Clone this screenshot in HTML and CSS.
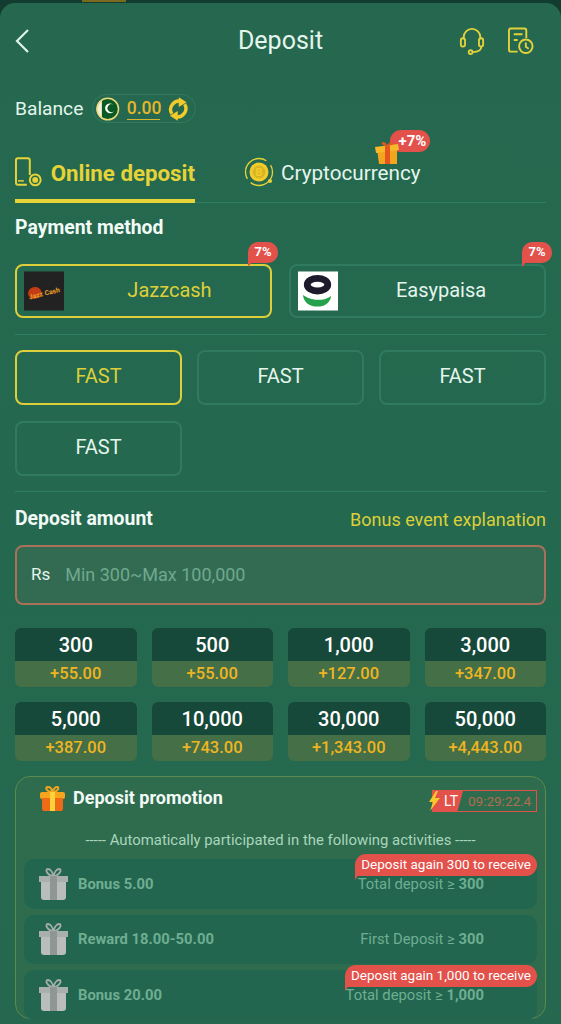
FILE: index.html
```html
<!DOCTYPE html>
<html lang="en">
<head>
  <meta charset="UTF-8" />
  <meta name="viewport" content="width=device-width, initial-scale=1.0" />
  <title>Deposit</title>
  <link rel="stylesheet" href="styles.css">
</head>
<body>
  <div class="top-mark"></div>
  <div class="panel">
    <header class="head">
      <svg class="back" width="16" height="24" viewBox="0 0 16 24"><path d="M13 1 2 12l11 11" fill="none" stroke="#dff3e8" stroke-width="2.2"/></svg>
      <h1 class="head-title">Deposit</h1>
      <div class="head-icons">
        <svg width="26" height="30" viewBox="0 0 28 30" fill="none" stroke="#e3d13c" stroke-width="2"><path d="M5 13V11a9 9 0 0 1 18 0v2"/><rect x="2" y="12" width="4.5" height="9" rx="2.2"/><rect x="21.5" y="12" width="4.5" height="9" rx="2.2"/><path d="M24 21c0 4-3 6-9 6"/><circle cx="12.5" cy="27" r="2"/></svg>
        <svg width="26" height="30" viewBox="0 0 27 30" fill="none" stroke="#e3d13c" stroke-width="2"><path d="M10 26H3a2 2 0 0 1-2-2V4a2 2 0 0 1 2-2h14a2 2 0 0 1 2 2v8"/><path d="M6 8h9M6 14h4"/><circle cx="18.5" cy="20.5" r="7"/><path d="M18.5 16.5v4.500l3 2"/></svg>
      </div>
    </header>

    <div class="balance">
      <span class="balance-label">Balance</span>
      <div class="balance-pill">
        <svg width="24" height="24" viewBox="0 0 24 24"><circle cx="12" cy="12" r="11" fill="#0b5a26"/><path d="M6 2.500A11 11 0 0 0 6 21.500Z" fill="#f4efd8"/><circle cx="12" cy="12" r="11" fill="none" stroke="#ecd97a" stroke-width="1.500"/><path d="M17.500 7.500A5 5 0 1 0 18.500 14 4 4 0 1 1 17.500 7.500Z" fill="#fff"/></svg>
        <span class="balance-num">0.00</span>
        <svg width="23" height="24" viewBox="0 0 23 24" fill="#f3c92c"><g id="turn"><path d="M15 4.500A8.500 8.500 0 0 0 5 17" fill="none" stroke="#f3c92c" stroke-width="3.500"/><path d="M12 0l8 5-8 5Z"/></g><use href="#turn" transform="rotate(180 11.500 12)"/></svg>
      </div>
    </div>

    <nav class="tabs">
      <div class="tab tab-on">
        <svg width="27" height="30" viewBox="0 0 27 30" fill="none" stroke="#e6d338" stroke-width="2"><path d="M12 28H3a2 2 0 0 1-2-2V3a2 2 0 0 1 2-2h10a2 2 0 0 1 2 2v15"/><path d="M3 24h6" stroke-width="1.500"/><circle cx="20.500" cy="23" r="5.500"/><circle cx="20.500" cy="23" r="3" fill="#e6d338" stroke="none"/></svg>
        <span>Online deposit</span>
      </div>
      <div class="tab">
        <svg width="30" height="30" viewBox="0 0 30 30" fill="none"><circle cx="15" cy="15" r="13.500" stroke="#e6d338" stroke-width="1.300" stroke-dasharray="30 5 36 6"/><circle cx="15" cy="15" r="9.500" fill="#f2cc2d"/><circle cx="15" cy="15" r="6.500" fill="#d9b524"/><text x="15" y="19" class="btc">B</text><circle cx="26" cy="24" r="2" fill="#e6d338"/></svg>
        <span>Cryptocurrency</span>
        <div class="plus-tag">+7%</div>
        <svg class="tab-gift" width="26" height="24" viewBox="0 0 26 24"><path d="M3 8h20v15H5Z" fill="#f3a51d"/><path d="M1 6 24 3l1 6L2 12Z" fill="#f7b92a"/><path d="M11 5h5v18h-5Z" fill="#e4551f"/><path d="M13 5C8 5 6 1 9 1s4 3 4 4c0-1 2-4 5-4s0 4-5 4Z" fill="#e4551f"/></svg>
      </div>
    </nav>

    <h2 class="sec-title">Payment method</h2>
    <div class="methods">
      <div class="method method-on">
        <svg class="method-logo" width="40" height="40" viewBox="0 0 41 40"><rect width="41" height="40" fill="#222"/><ellipse cx="11" cy="22" rx="7" ry="6" fill="#c43c14" transform="rotate(-15 11 22)"/><text x="4" y="25" class="jazz" transform="rotate(-14 20 20)">Jazz Cash</text></svg>
        <span>Jazzcash</span>
        <div class="pct">7%</div>
      </div>
      <div class="method">
        <svg class="method-logo" width="40" height="40" viewBox="0 0 41 40"><rect width="41" height="40" fill="#fff"/><ellipse cx="20" cy="13.500" rx="10.500" ry="6.500" fill="none" stroke="#1d1a2c" stroke-width="7"/><path d="M5 24c6 4 12 5 16 5 5 0 9-1 13-4-1 7-7 11-14 11-9 0-14-5-15-12Z" fill="#27a24c"/></svg>
        <span>Easypaisa</span>
        <div class="pct">7%</div>
      </div>
    </div>

    <div class="rule rule-first"></div>

    <div class="channels">
      <div class="channel channel-on">FAST</div>
      <div class="channel">FAST</div>
      <div class="channel">FAST</div>
      <div class="channel">FAST</div>
    </div>

    <div class="rule"></div>

    <div class="amount-head">
      <h2 class="sec-title sec-title-flat">Deposit amount</h2>
      <span class="bonus-link">Bonus event explanation</span>
    </div>

    <div class="amount-input">
      <span class="rs">Rs</span>
      <span class="hint">Min 300~Max 100,000</span>
    </div>

    <div class="amounts">
      <div class="amount"><b>300</b><i>+55.00</i></div>
      <div class="amount"><b>500</b><i>+55.00</i></div>
      <div class="amount"><b>1,000</b><i>+127.00</i></div>
      <div class="amount"><b>3,000</b><i>+347.00</i></div>
      <div class="amount"><b>5,000</b><i>+387.00</i></div>
      <div class="amount"><b>10,000</b><i>+743.00</i></div>
      <div class="amount"><b>30,000</b><i>+1,343.00</i></div>
      <div class="amount"><b>50,000</b><i>+4,443.00</i></div>
    </div>

    <section class="promo">
      <div class="promo-head">
        <svg width="25" height="25" viewBox="0 0 25 25"><path d="M12 6C7 6 4 1 8 1s4 4 4.500 5C13 5 14 1 17 1s1 5-4.500 5Z" fill="none" stroke="#f3a51d" stroke-width="2"/><rect y="6" width="25" height="7" rx="2" fill="#f7a51d"/><path d="M2 12h21v11a2 2 0 0 1-2 2H4a2 2 0 0 1-2-2Z" fill="#ee6a14"/><rect x="10" y="6" width="5" height="19" fill="#fbd13c"/></svg>
        <h3 class="promo-title">Deposit promotion</h3>
        <div class="timer">
          <svg class="bolt" width="11" height="20" viewBox="0 0 11 20"><path d="M7 0 0 11h4l-3 9 10-13H6l3-7Z" fill="#f5c82b"/></svg>
          <span class="timer-lt">LT</span>
          <span class="timer-time">09:29:22.4</span>
        </div>
      </div>
      <p class="promo-note">----- Automatically participated in the following activities -----</p>
      <div class="promo-rows">
        <div class="promo-row">
          <svg width="31" height="32" viewBox="0 0 31 32"><use href="#grey-gift"/></svg>
          <span class="promo-name">Bonus 5.00</span>
          <span class="promo-rule">Total deposit ≥ <b>300</b></span>
          <div class="again">Deposit again 300 to receive</div>
        </div>
        <div class="promo-row">
          <svg width="31" height="32" viewBox="0 0 31 32"><use href="#grey-gift"/></svg>
          <span class="promo-name">Reward 18.00-50.00</span>
          <span class="promo-rule">First Deposit ≥ <b>300</b></span>
        </div>
        <div class="promo-row">
          <svg width="31" height="32" viewBox="0 0 31 32"><use href="#grey-gift"/></svg>
          <span class="promo-name">Bonus 20.00</span>
          <span class="promo-rule">Total deposit ≥ <b>1,000</b></span>
          <div class="again">Deposit again 1,000 to receive</div>
        </div>
      </div>
    </section>
  </div>

  <svg width="0" height="0" class="defs">
    <defs>
      <g id="grey-gift">
        <path d="M15 8C10 8 6 1 10 1c3 0 5 5 5.500 7C16 6 18 1 21 1c4 0 0 7-5.500 7Z" fill="none" stroke="#a5aeaa" stroke-width="1.800"/>
        <path d="M1 8h29v6H1Z" fill="#a9afac"/>
        <path d="M3 14h25v15a3 3 0 0 1-3 3H6a3 3 0 0 1-3-3Z" fill="#b9bdbb"/>
        <rect x="12" y="8" width="7" height="24" fill="#8f9794"/>
      </g>
    </defs>
  </svg>
</body>
</html>
```
FILE: styles.css
```css
* {
  box-sizing: border-box;
}

body {
  font-family: Roboto, sans-serif;
  margin: 0;
  height: 1024px;
  overflow: hidden;
  background-color: #123c2f;
  color: #e4f5ec;
  position: relative;
}

.top-mark {
  position: absolute;
  left: 82px;
  top: 0;
  width: 44px;
  height: 2px;
  background-color: #7b6a1f;
}

.defs {
  position: absolute;
}

.panel {
  margin-top: 3px;
  height: 1021px;
  padding: 0 15px;
  background: linear-gradient(#25684f, #24694f 50%, #25684f);
  border-radius: 15px 15px 0 0;
}

.head {
  height: 74px;
  padding-top: 1px;
  display: flex;
  align-items: center;
  position: relative;
}

.head-title {
  position: absolute;
  left: 0;
  right: 0;
  margin: 0;
  text-align: center;
  font-size: 25px;
  font-weight: 400;
}

.head-icons {
  margin-left: auto;
  margin-right: 12px;
  display: flex;
  gap: 23px;
  align-items: center;
}

.balance {
  margin-top: 17px;
  display: flex;
  align-items: center;
  gap: 9px;
}

.balance-label {
  font-size: 19.200px;
}

.balance-pill {
  width: 104px;
  height: 29px;
  padding: 0 6px 0 3px;
  display: flex;
  align-items: center;
  border: 1px solid #2f7a60;
  border-radius: 15px;
}

.balance-num {
  margin: 0 7px 0 7px;
  width: 33px;
  font-size: 17.500px;
  font-weight: 500;
  color: #e6b62c;
  border-bottom: 1px solid #d9b52f;
  line-height: 21px;
}

.tabs {
  margin-top: 29px;
  height: 51px;
  display: flex;
  gap: 49px;
  border-bottom: 1px solid #2f7f63;
}

.tab {
  height: 51px;
  position: relative;
  display: flex;
  align-items: flex-start;
  padding-top: 5px;
  gap: 7px;
  font-size: 20.700px;
  line-height: 32px;
  white-space: nowrap;
}

.tab-on {
  width: 180px;
  gap: 9px;
  font-size: 22.300px;
  font-weight: 700;
  color: #e6d338;
  border-bottom: 4px solid #e6d338;
}

.btc {
  font: 700 11px Roboto, sans-serif;
  fill: #f2cc2d;
  text-anchor: middle;
}

.plus-tag {
  position: absolute;
  left: 146px;
  top: -22px;
  width: 40px;
  height: 22px;
  padding-left: 5px;
  border-radius: 11px;
  background-color: #e2514a;
  color: #fff;
  font-size: 15px;
  font-weight: 700;
  line-height: 22px;
  text-align: center;
}

.tab-gift {
  position: absolute;
  left: 130px;
  top: -11px;
}

.sec-title {
  margin: 13px 0 0;
  font-size: 19.400px;
  font-weight: 700;
  line-height: 24px;
  color: #f2faf6;
}

.sec-title-flat {
  margin: 0;
}

.methods {
  margin-top: 24px;
  display: grid;
  grid-template-columns: 257px 257px;
  gap: 17px;
}

.method {
  height: 54px;
  position: relative;
  display: flex;
  align-items: center;
  padding: 0 0 2px 7px;
  border: 2px solid #2f7a60;
  border-radius: 8px;
  font-size: 20px;
}

.method span {
  flex: 1;
  text-align: center;
}

.method-logo {
  flex: none;
  margin-top: 2px;
}

.method-on {
  border-color: #dccf3a;
  color: #dccf3a;
}

.method-on span {
  padding-left: 5px;
}

.jazz {
  font: 700 7px Roboto, sans-serif;
  fill: #eaa028;
}

.pct {
  position: absolute;
  right: -8px;
  top: -24px;
  width: 30px;
  height: 21px;
  border-radius: 10px 10px 10px 2px;
  background-color: #e2514a;
  color: #fff;
  font-size: 13px;
  font-weight: 700;
  line-height: 20px;
  text-align: center;
}

.pct::after {
  content: "";
  position: absolute;
  left: 0;
  top: 19px;
  border-left: 5px solid #e2514a;
  border-bottom: 6px solid transparent;
}

.rule {
  margin: 15px 0;
  height: 1px;
  background-color: #2f7f63;
}

.rule-first {
  margin-top: 16px;
}

.channels {
  display: grid;
  grid-template-columns: repeat(3, 1fr);
  gap: 16px 15px;
}

.channel {
  height: 55px;
  padding-bottom: 3px;
  display: flex;
  align-items: center;
  justify-content: center;
  border: 2px solid #2f7a60;
  border-radius: 8px;
  font-size: 20px;
}

.channel-on {
  border-color: #dccf3a;
  color: #dccf3a;
}

.amount-head {
  margin-top: 14px;
  display: flex;
  justify-content: space-between;
  align-items: center;
}

.bonus-link {
  font-size: 18px;
  color: #dccf3a;
}

.amount-input {
  margin-top: 14px;
  height: 60px;
  padding: 0 0 2px 14px;
  display: flex;
  align-items: center;
  gap: 15px;
  background-color: #336b52;
  border: 2px solid #a9705a;
  border-radius: 8px;
}

.rs {
  font-size: 17px;
}

.hint {
  font-size: 18px;
  color: #6fa88f;
}

.amounts {
  margin-top: 23px;
  display: grid;
  grid-template-columns: repeat(4, 1fr);
  gap: 15px;
}

.amount {
  height: 59px;
  display: flex;
  flex-direction: column;
  border-radius: 6px;
  overflow: hidden;
  text-align: center;
}

.amount b {
  height: 33px;
  background-color: #17493a;
  color: #fff;
  font-size: 20px;
  font-weight: 500;
  line-height: 34px;
}

.amount i {
  flex: 1;
  background-color: #456f47;
  color: #efb522;
  font-size: 16.500px;
  font-style: normal;
  font-weight: 500;
  line-height: 25px;
}

.promo {
  margin-top: 15px;
  height: 243px;
  padding: 0 8px;
  background-color: #2f6c4e;
  border: 1px solid #5c8a4a;
  border-radius: 15px;
}

.promo-head {
  height: 42px;
  padding: 9px 0 0 16px;
  display: flex;
  align-items: flex-start;
  gap: 8px;
}

.promo-title {
  margin: 0;
  font-size: 18px;
  font-weight: 700;
  line-height: 24px;
  color: #f2faf6;
}

.timer {
  margin-left: auto;
  margin-top: 4px;
  position: relative;
  width: 105px;
  height: 22px;
  display: flex;
  border: 1px solid #e2514a;
  font-size: 14px;
  line-height: 20px;
}

.bolt {
  position: absolute;
  left: -4px;
  top: 0;
  z-index: 1;
}

.timer-lt {
  width: 30px;
  padding-left: 11px;
  background-color: #e2514a;
  color: #fff;
  clip-path: polygon(0 0, 100% 0, 82% 100%, 0 100%);
}

.timer-time {
  padding-left: 5px;
  color: #b06c50;
  font-size: 13.500px;
}

.promo-note {
  margin: 11px 0 0;
  text-align: center;
  font-size: 14.900px;
  line-height: 20px;
  color: #a9d6bd;
}

.promo-rows {
  margin-top: 9px;
  display: flex;
  flex-direction: column;
  gap: 6px;
}

.promo-row {
  height: 49.500px;
  position: relative;
  display: flex;
  align-items: center;
  padding: 0 53px 0 14px;
  background-color: #226650;
  border-radius: 10px;
  font-size: 14.800px;
  color: #6fae92;
}

.promo-name {
  margin-left: 9px;
  font-weight: 700;
}

.promo-rule {
  margin-left: auto;
}

.promo-rule b {
  font-weight: 700;
}

.again {
  position: absolute;
  right: 0;
  top: -5px;
  height: 22px;
  padding: 0 6px;
  border-radius: 11px 11px 11px 2px;
  background-color: #e2514a;
  color: #fff;
  font-size: 13.500px;
  line-height: 21px;
}

.again::after {
  content: "";
  position: absolute;
  left: 0;
  top: 20px;
  border-left: 4px solid #e2514a;
  border-bottom: 6px solid transparent;
}
```
